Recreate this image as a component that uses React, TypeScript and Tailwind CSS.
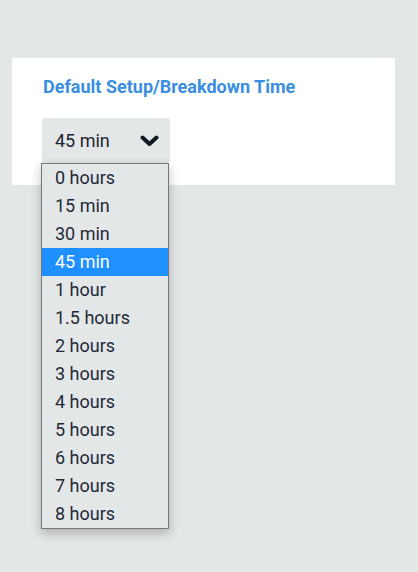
import { useState } from "react";

const options = [
  "0 hours",
  "15 min",
  "30 min",
  "45 min",
  "1 hour",
  "1.5 hours",
  "2 hours",
  "3 hours",
  "4 hours",
  "5 hours",
  "6 hours",
  "7 hours",
  "8 hours",
];

export default function App() {
  const [value] = useState("45 min");

  return (
    <div className="min-h-[572px] w-full bg-[#e4e7e8] pt-[58px] pl-3 pr-[23px] font-['Roboto',sans-serif]">
      <div className="bg-white h-[127px] pl-[31px] pt-[18px]">
        <h2 className="text-[18px] font-bold text-[#3a8ee0] leading-[22px]">
          Default Setup/Breakdown Time
        </h2>
        <div className="relative mt-[20px] ml-[-1px] w-[128px]">
          <button className="flex h-[45px] w-full items-center justify-between rounded-[3px] bg-[#e4e7e8] pl-[13px] pr-[11px] text-[18px] text-[#1b2430]">
            <span>{value}</span>
            <svg width="19" height="12" viewBox="0 0 19 12" className="mt-[1px]">
              <path d="M2.5 2.5 L9.5 9 L16.5 2.5" fill="none" stroke="#111a24" strokeWidth="4" strokeLinecap="round" strokeLinejoin="round" />
            </svg>
          </button>
          <ul className="absolute left-[-1px] top-[45px] w-[128px] border border-[#777] bg-[#e4e7e8] shadow-[0_4px_10px_rgba(0,0,0,0.25)] z-10">
            {options.map((o) => (
              <li
                key={o}
                className={
                  o === value
                    ? "h-7 pl-[13px] leading-[27px] text-[18px] bg-[#1e90ff] text-white"
                    : "h-7 pl-[13px] leading-[27px] text-[18px] text-[#1f2a37]"
                }
              >
                {o}
              </li>
            ))}
          </ul>
        </div>
      </div>
    </div>
  );
}
